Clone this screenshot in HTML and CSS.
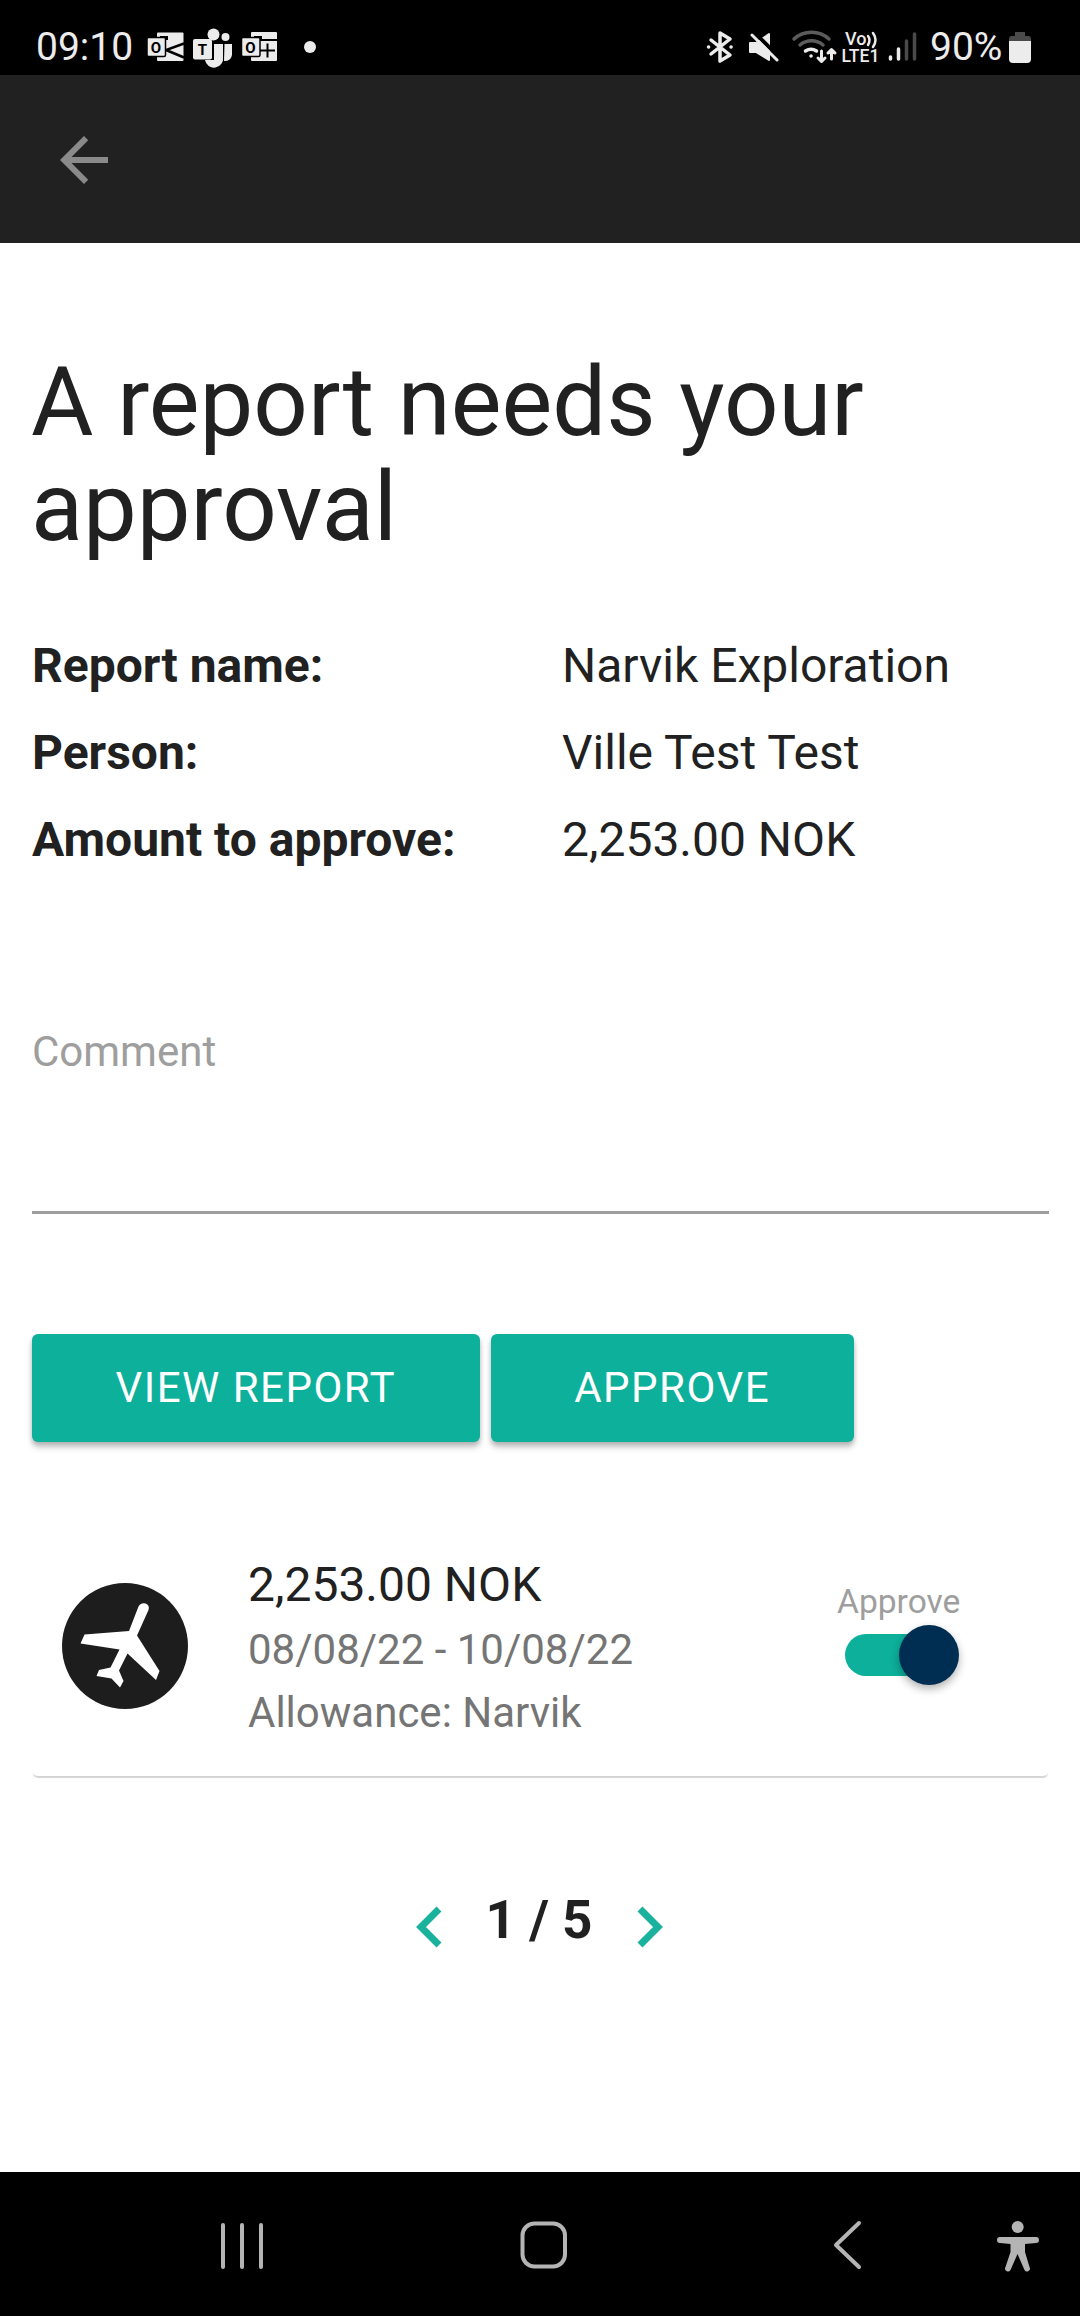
FILE: index.html
```html
<!DOCTYPE html>
<html lang="en">
<head>
<meta charset="utf-8">
<title>Report approval</title>
<link rel="stylesheet" href="styles.css">
</head>
<body>
<div class="status">
  <span class="clock">09:10</span>
  <svg class="notif" width="150" height="75" viewBox="140 0 150 75" fill="#ececec">
    <rect x="157" y="32.500" width="26.500" height="28.500" rx="1"/>
    <path d="M184 43.500l-18 6.500 18 7.500" fill="none" stroke="#000" stroke-width="2.500"/>
    <path d="M160 36h8v4h-8z" fill="#000"/>
    <rect x="147" y="37.500" width="18.500" height="19" rx="1.500" stroke="#000" stroke-width="1.500"/>
    <text class="badge-letter" x="155.800" y="52.500">O</text>
    <circle cx="213.500" cy="34.500" r="6"/>
    <circle cx="225.500" cy="37" r="4"/>
    <path d="M214 44h9v13a9 9 0 0 1-18 3h9zM224.500 44h7.500v11a7 7 0 0 1-8 6z"/>
    <rect x="193" y="39" width="19" height="20.500" rx="2"/>
    <text class="badge-letter" x="202.300" y="55">T</text>
    <rect x="251" y="32" width="26" height="29" rx="1"/>
    <path d="M251 40h26M267.500 43.500v14M260 50.500h15" fill="none" stroke="#000" stroke-width="2"/>
    <path d="M254 36h8v4h-8z" fill="#000"/>
    <rect x="241.500" y="37.500" width="18.500" height="19" rx="1.500" stroke="#000" stroke-width="1.500"/>
    <text class="badge-letter" x="250.500" y="52.500">O</text>
  </svg>
  <span class="more"></span>
  <svg class="system" width="240" height="75" viewBox="700 0 240 75" fill="none" stroke="#ececec" stroke-width="3.500" stroke-linecap="round" stroke-linejoin="round">
    <path d="M711 40l19 15-10 6V33l10 6-19 15"/>
    <path d="M708.500 47h.1M731 47h.1"/>
    <path d="M750 43h6l13-9v26l-13-8h-6z" fill="#ececec" stroke-width="2"/>
    <path d="M753 31l29 29" stroke="#000" stroke-width="4"/>
    <path d="M752 35l25 25" stroke-width="3"/>
    <path d="M794 39a26 26 0 0 1 35 0M800 45a18 18 0 0 1 23 0" stroke="#5c5c5c"/>
    <path d="M805.500 51a10 10 0 0 1 11 0M811 56h.1"/>
    <path d="M821.500 51v10M818 58l3.500 3.500L825 58M831.500 59V50M828 53l3.500-3.500L835 53" stroke-width="3"/>
    <g fill="#ececec" stroke="none"><text class="net" x="845" y="45">Vo</text><text class="net" x="841.500" y="62" textLength="38" lengthAdjust="spacingAndGlyphs">LTE1</text></g>
    <path d="M868 36q3 4 0 9M873 33q5 7 0 14" stroke-width="2.500"/>
    <path d="M890.500 57v2M898.500 49v10"/>
    <path d="M906.500 41v18M914.500 34v25" stroke="#4a4a4a"/>
  </svg>
  <span class="percent">90%</span>
  <svg class="battery" width="22" height="75" viewBox="0 0 22 75"><path d="M6 32h10v4h3q3 0 3 3v3H0v-3q0-3 3-3h3z" fill="#4a4a4a"/><path d="M0 41h22v18q0 4-4 4H4q-4 0-4-4z" fill="#ececec"/></svg>
</div>
<header class="appbar">
  <svg width="72" height="72" viewBox="0 0 24 24" fill="#8a8a8a"><path d="M20 11H7.830l5.590-5.590L12 4l-8 8 8 8 1.410-1.410L7.830 13H20v-2z"/></svg>
</header>
<main class="content">
  <h1 class="title">A report needs your approval</h1>
  <dl class="facts">
    <dt>Report name:</dt><dd>Narvik Exploration</dd>
    <dt>Person:</dt><dd>Ville Test Test</dd>
    <dt>Amount to approve:</dt><dd>2,253.00 NOK</dd>
  </dl>
  <div class="comment">Comment</div>
  <div class="actions">
    <button class="btn">VIEW REPORT</button>
    <button class="btn">APPROVE</button>
  </div>
  <section class="expense">
    <svg class="plane" width="126" height="126" viewBox="0 0 126 126"><circle cx="63" cy="63" r="63" fill="#1d1d1d"/><path d="M76.500 23.500Q79 19.500 83.500 20.500 88 22 86.500 27L75 52.500 97.500 88 94 97 65.500 70.500 57 87.500 61.500 98 58 104.500 49.500 95.500 34.500 93 37 87 48.500 84.500 57.500 66.500 18.500 60.500 22.500 51.500 67 48z" fill="#fff"/></svg>
    <div class="details">
      <div class="amount">2,253.00 NOK</div>
      <div>08/08/22 - 10/08/22</div>
      <div>Allowance: Narvik</div>
    </div>
    <div class="switch">
      <span>Approve</span>
      <span class="track"><span class="knob"></span></span>
    </div>
  </section>
  <nav class="pager">
    <svg width="26" height="42" viewBox="0 0 26 42"><path d="M23 3L5 21l18 18"/></svg>
    <span>1 / 5</span>
    <svg width="26" height="42" viewBox="0 0 26 42"><path d="M3 3l18 18L3 39"/></svg>
  </nav>
</main>
<footer class="navbar">
  <svg width="1080" height="144" viewBox="0 2172 1080 144" fill="none" stroke="#b4b4b4" stroke-width="4" stroke-linecap="round" stroke-linejoin="round">
    <path d="M223 2225v42M242 2225v42M261 2225v42"/>
    <rect x="522.500" y="2223.500" width="42.500" height="43" rx="12"/>
    <path d="M859 2223l-23 22 23 22"/>
    <g fill="#b4b4b4" stroke="none"><circle cx="1017.700" cy="2227" r="6"/><path d="M1000 2237h36a3 3 0 0 1 0 6l-11 1v8l4.500 15a2.800 2.800 0 0 1-5 3l-7-16-7 16a2.800 2.800 0 0 1-5-3l5-15v-8l-10.500-1a3 3 0 0 1 0-6z"/></g>
  </svg>
</footer>
</body>
</html>
```
FILE: styles.css
```css
* { box-sizing: border-box; }
body {
  margin: 0;
  width: 1080px;
  height: 2316px;
  display: flex;
  flex-direction: column;
  background: #fff;
  color: #212121;
  font-family: Roboto, sans-serif;
}
svg { display: block; flex: none; }

.status {
  height: 75px;
  display: flex;
  background: #000;
  color: #ececec;
  font-size: 39px;
  line-height: 95px;
}
.clock { width: 104px; margin-left: 36px; }
.badge-letter { font: 700 15px Roboto, sans-serif; text-anchor: middle; fill: #000; }
.more { width: 12px; height: 12px; margin: 41px 0 0 14px; border-radius: 50%; background: #ececec; }
.system { margin-left: 384px; }
.net { font: 500 18px Roboto, sans-serif; }
.percent { width: 79px; margin-left: -10px; }

.appbar {
  height: 168px;
  display: flex;
  align-items: center;
  padding: 1px 0 0 48px;
  background: #212121;
}

.content { flex: 1; display: flex; flex-direction: column; padding: 0 31px 0 32px; }
.title { margin: 107px 0 0 -1px; font-size: 95.760px; font-weight: 400; line-height: 105.3px; }
.facts {
  margin: 61.400px 0 0;
  display: grid;
  grid-template-columns: 530px 1fr;
  grid-auto-rows: 87px;
  font-size: 48px;
  line-height: 87px;
}
.facts dt { font-weight: 700; }
.facts dd { margin: 0; }
.comment {
  height: 194px;
  margin-top: 137px;
  border-bottom: 3px solid #9e9e9e;
  color: #9e9e9e;
  font-size: 42px;
  line-height: 63px;
}
.actions { display: flex; gap: 11px; margin-top: 120px; }
.btn {
  height: 108px;
  padding: 0 83.500px;
  border: 0;
  border-radius: 6px;
  background: #0cb09b;
  box-shadow: 0 6px 6px rgba(0,0,0,.14), 0 3px 5px rgba(0,0,0,.2);
  color: #fff;
  font: 400 42px/106px Roboto, sans-serif;
  letter-spacing: 1.5px;
}
.expense {
  height: 229px;
  margin-top: 105px;
  display: flex;
  padding-left: 30px;
  border-radius: 6px;
  box-shadow: 0 3px 1px -1px rgba(0,0,0,.17);
}
.plane { margin-top: 36px; }
.details { width: 589px; margin: 5px 0 0 60px; color: #757575; font-size: 42px; line-height: 63px; }
.amount { color: #212121; font-size: 48px; line-height: 66px; }
.switch { display: flex; flex-direction: column; width: 150px; color: #9e9e9e; font-size: 33.600px; line-height: 40px; padding-top: 35px; }
.track { position: relative; width: 108px; height: 42px; margin: 12px 0 0 8px; border-radius: 21px; background: #0cb09b; }
.knob {
  position: absolute;
  top: -9px;
  right: -6px;
  width: 60px;
  height: 60px;
  border-radius: 50%;
  background: #002d52;
  box-shadow: 0 4px 8px rgba(0,0,0,.3);
}
.pager { display: flex; justify-content: center; margin: 112px 3px 0 0; font-size: 53px; font-weight: 700; line-height: 64px; }
.pager span { width: 195px; text-align: center; }
.pager svg { margin-top: 18px; fill: none; stroke: #1ab19d; stroke-width: 7; }
.navbar { height: 144px; background: #000; }
```
